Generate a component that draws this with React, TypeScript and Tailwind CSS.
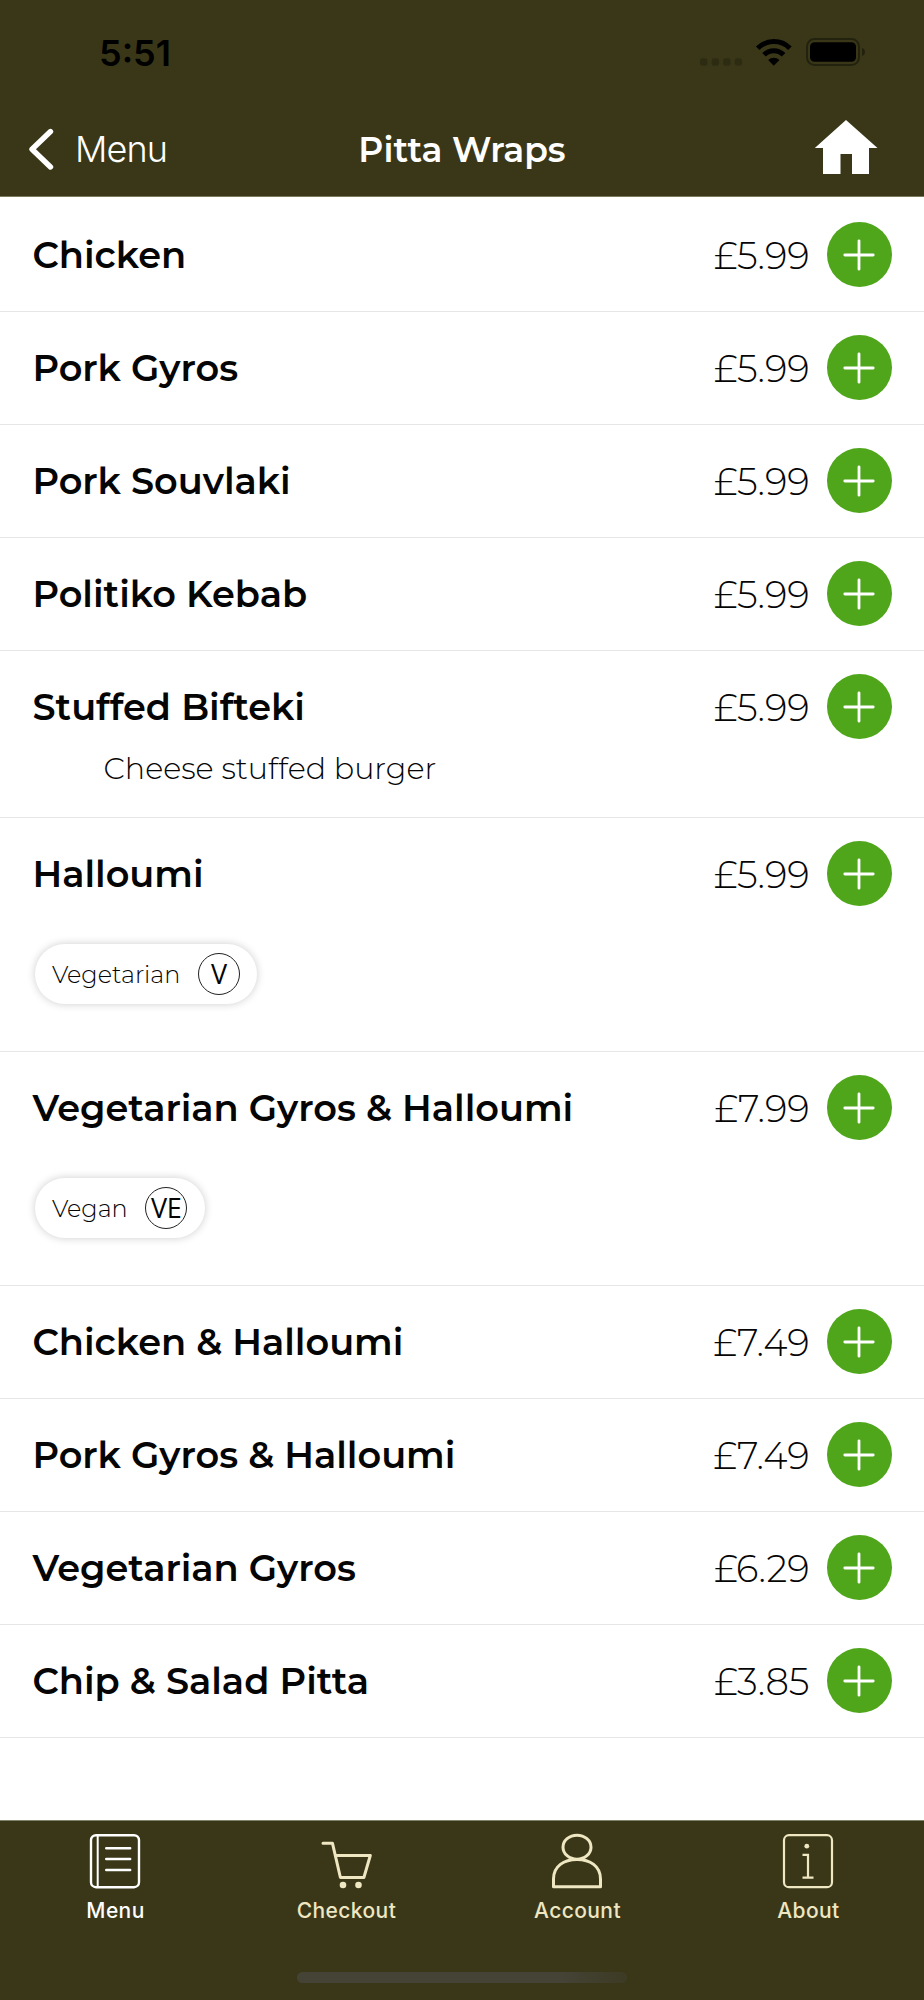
import React from 'react';

type Diet = { label: string; code: string };

type MenuItem = {
  name: string;
  price: string;
  description?: string;
  diet?: Diet;
};

const items: MenuItem[] = [
  { name: 'Chicken', price: '£5.99' },
  { name: 'Pork Gyros', price: '£5.99' },
  { name: 'Pork Souvlaki', price: '£5.99' },
  { name: 'Politiko Kebab', price: '£5.99' },
  { name: 'Stuffed Bifteki', price: '£5.99', description: 'Cheese stuffed burger' },
  { name: 'Halloumi', price: '£5.99', diet: { label: 'Vegetarian', code: 'V' } },
  { name: 'Vegetarian Gyros & Halloumi', price: '£7.99', diet: { label: 'Vegan', code: 'VE' } },
  { name: 'Chicken & Halloumi', price: '£7.49' },
  { name: 'Pork Gyros & Halloumi', price: '£7.49' },
  { name: 'Vegetarian Gyros', price: '£6.29' },
  { name: 'Chip & Salad Pitta', price: '£3.85' },
];

const StatusIcons: React.FC = () => (
  <svg width="168" height="30" viewBox="0 1 168 30" fill="none">
    {/* no signal dots */}
    <g fill="#000" fillOpacity="0.2">
      <rect x="2" y="21.3" width="7.5" height="7.5" rx="2.4" />
      <rect x="13.6" y="21.3" width="7.5" height="7.5" rx="2.4" />
      <rect x="25.1" y="21.3" width="7.5" height="7.5" rx="2.4" />
      <rect x="36.6" y="21.3" width="7.5" height="7.5" rx="2.4" />
    </g>
    {/* wifi */}
    <g stroke="#000" strokeWidth="5">
      <path d="M59.7 11.3a22.6 22.6 0 0 1 32.2 0" />
      <path d="M66 17.8a13.8 13.8 0 0 1 19.6 0" />
    </g>
    <path d="M70.2 23a8 8 0 0 1 11.2 0l-5.6 5.8z" fill="#000" />
    {/* battery */}
    <rect x="109" y="2" width="52" height="26" rx="7.5" stroke="#000" strokeOpacity="0.38" strokeWidth="2" />
    <rect x="112" y="5.3" width="46" height="19.5" rx="4.5" fill="#000" />
    <path d="M164 11c2 .6 3 2.2 3 4s-1 3.4-3 4z" fill="#000" fillOpacity="0.4" />
  </svg>
);

const Header: React.FC = () => (
  <header className="h-[197px] bg-[#393718] border-b border-[#7b7a5f]">
    <div className="h-[106px] flex items-center justify-between pl-[99px] pr-[58px]">
      <span className="font-['Inter',sans-serif] font-semibold text-[36px] leading-none text-black">5:51</span>
      <StatusIcons />
    </div>
    <div className="h-[87px] grid grid-cols-3 items-center text-white">
      <button className="flex items-center pl-[28px] pb-[2px] text-left">
        <svg width="26" height="42" viewBox="0 0 26 42" fill="none">
          <path d="M22.5 3.5 4 21.2 22.5 39" stroke="currentColor" strokeWidth="5.4" strokeLinecap="round" strokeLinejoin="round" />
        </svg>
        <span className="pl-[21px] pt-px font-['Inter',sans-serif] font-light text-[36px] leading-[40px] tracking-[-0.9px]">Menu</span>
      </button>
      <h1 className="pt-px text-center font-['Montserrat','Open_Sans',sans-serif] font-semibold text-[34.5px] leading-[40px] whitespace-nowrap">
        Pitta Wraps
      </h1>
      <button className="justify-self-end pr-[46px] pb-[6px]">
        <svg width="64" height="56" viewBox="0 0 64 56" className="block">
          <path d="M32 1 63.5 29H55v26H38V35H26.5v20H9V29H.8z" fill="currentColor" />
        </svg>
      </button>
    </div>
  </header>
);

const DietBadge: React.FC<{ diet: Diet }> = ({ diet }) => (
  <div className="mt-[38px] mb-[23px] ml-[2px] h-[60px] w-fit flex items-center gap-[17.5px] pl-[17.5px] pr-[17.5px] rounded-full bg-white shadow-[0_0_8px_rgba(0,0,0,0.2)]">
    <span className="pt-px font-light text-[23.9px] leading-none">{diet.label}</span>
    <span className="w-[42px] h-[42px] pb-px flex items-center justify-center rounded-full border border-[#222] font-['Open_Sans',sans-serif] font-medium text-[27px] leading-none tracking-[-0.5px]">
      {diet.code}
    </span>
  </div>
);

const MenuRow: React.FC<{ item: MenuItem }> = ({ item }) => (
  <li className="pl-[32.5px] pr-[32.5px] pt-[23px] pb-[24px] border-b border-[#e6e6e6]">
    <div className="h-[65px] flex items-center">
      <h2 className="flex-1 font-semibold text-[36.7px] leading-[44px]">{item.name}</h2>
      <span className="pr-[17px] pt-[2px] font-light text-[37px] leading-[44px]">{item.price}</span>
      <button className="w-[65px] h-[65px] rounded-full bg-[#4fa61a] flex items-center justify-center">
        <svg width="32" height="32" viewBox="0 0 32 32">
          <path d="M16 1.8v28.4M1.8 16h28.4" stroke="#fff" strokeWidth="2.8" strokeLinecap="round" />
        </svg>
      </button>
    </div>
    {item.description && (
      <p className="mt-[10px] mb-[4px] pl-[71px] font-light text-[30.2px] leading-[40px]">{item.description}</p>
    )}
    {item.diet && <DietBadge diet={item.diet} />}
  </li>
);

const tabs = [
  {
    label: 'Menu',
    color: 'text-white',
    icon: (
      <>
        <rect x="2" y="2.2" width="48" height="52" rx="5" strokeWidth="2.4" />
        <path d="M8.7 2.2v52" strokeWidth="2" />
        <path d="M17.2 15.3h24M17.2 26h24M17.2 37h24" strokeWidth="2.4" strokeLinecap="round" />
      </>
    ),
  },
  {
    label: 'Checkout',
    color: 'text-[#efe6c2]',
    icon: (
      <>
        <path d="M3 10.3h9.5L20.4 44.5h23.5l6.4-22H15.2" strokeWidth="3" strokeLinecap="round" strokeLinejoin="round" />
        <circle cx="23" cy="52" r="3.3" fill="currentColor" stroke="none" />
        <circle cx="38.5" cy="52" r="3.3" fill="currentColor" stroke="none" />
      </>
    ),
  },
  {
    label: 'Account',
    color: 'text-[#efe6c2]',
    icon: (
      <>
        <ellipse cx="26" cy="14.2" rx="14" ry="12" strokeWidth="3" />
        <path d="M2.5 53.8V46C2.5 33 13 26.5 26 26.5S49.5 33 49.5 46v7.8z" strokeWidth="3" strokeLinejoin="round" />
      </>
    ),
  },
  {
    label: 'About',
    color: 'text-[#efe6c2]',
    icon: (
      <>
        <rect x="2" y="2.2" width="48" height="52" rx="5" strokeWidth="2.2" />
        <circle cx="24.8" cy="13.2" r="2.4" fill="currentColor" stroke="none" />
        <path d="M20.5 21.8H26v22.8M20.5 44.6h11" strokeWidth="2.2" />
      </>
    ),
  },
];

const TabBar: React.FC = () => (
  <nav className="h-[180px] bg-[#393718] border-t border-[#7f836c]">
    <div className="grid grid-cols-4 pt-[12px]">
      {tabs.map((tab) => (
        <button key={tab.label} className={`flex flex-col items-center ${tab.color}`}>
          <svg width="52" height="56" viewBox="0 0 52 56" fill="none" stroke="currentColor" className="mr-px">
            {tab.icon}
          </svg>
          <span className="mt-[8px] font-['Inter',sans-serif] font-medium text-[21px] leading-[28px] tracking-[0.4px]">
            {tab.label}
          </span>
        </button>
      ))}
    </div>
    <div className="mx-auto mt-[47px] w-[330px] h-[11px] rounded-full bg-linear-to-r from-[#444336] from-80% to-[#3d3b24]" />
  </nav>
);

const App: React.FC = () => {
  return (
    <div className="w-[924px] h-[2000px] flex flex-col bg-white text-[#050505] font-['Montserrat','Open_Sans',sans-serif]">
      <Header />
      <main className="flex-1 pt-[2px]">
        <ul>
          {items.map((item) => (
            <MenuRow key={item.name} item={item} />
          ))}
        </ul>
      </main>
      <TabBar />
    </div>
  );
};

export default App;
